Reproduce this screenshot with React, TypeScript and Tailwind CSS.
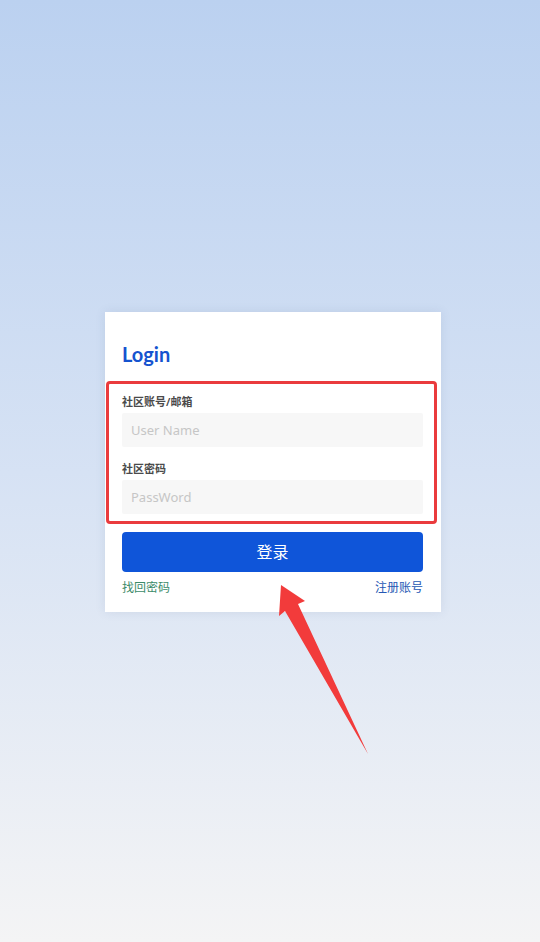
import React from 'react'

const cjk = '"Noto Sans", "Noto Sans CJK SC", sans-serif'

function Field({ label, placeholder, type }: { label: string; placeholder: string; type: string }) {
  return (
    <div>
      <div className="text-[11px] leading-[16px] font-semibold text-[#4a4a4a]">{label}</div>
      <input
        type={type === 'password' ? 'text' : type}
        placeholder={placeholder}
        className="mt-[3px] block w-full h-[34px] rounded-[2px] bg-[#f7f7f7] pl-[9px] text-[13px] text-[#333] outline-none placeholder:text-[#c6c6c6]"
      />
    </div>
  )
}

export default function App() {
  return (
    <div
      className="relative w-full min-h-[942px] bg-gradient-to-b from-[#bbd1f0] via-[#d6e2f4] to-[#f4f4f5] pt-[312px]"
      style={{ fontFamily: cjk }}
    >
      <div className="ml-[105px] w-[336px] bg-white pl-[17px] pr-[18px] pt-[28px] pb-[15px] shadow-[0_0_10px_rgba(60,80,120,0.10)]">
        <h1 className="text-[20px] leading-[28px] font-bold text-[#1553cf] font-['Lato']">Login</h1>

        {/* red annotation box round the fields */}
        <div className="mt-[13px] -ml-[16px] -mr-[14px] rounded-[4px] border-[3px] border-[#ea3b3d] pl-[13px] pr-[11px] pt-[10px] pb-[7px]">
          <Field label="社区账号/邮箱" placeholder="User Name" type="text" />
          <div className="mt-[14px]">
            <Field label="社区密码" placeholder="PassWord" type="password" />
          </div>
        </div>

        <button className="mt-[8px] block w-full h-[40px] rounded-[4px] bg-[#0f55d9] text-white text-[16px]">
          登录
        </button>

        <div className="mt-[7px] flex justify-between text-[12px] leading-[18px]">
          <a className="text-[#3b8b69]">找回密码</a>
          <a className="text-[#2558b4]">注册账号</a>
        </div>
      </div>

      {/* red arrow pointing at the button */}
      <svg className="absolute left-0 top-0 pointer-events-none" width="540" height="942" viewBox="0 0 540 942">
        <polygon points="281,585 305,601 298,604 368,754 285,611 279,616" fill="#f23b3b" />
      </svg>
    </div>
  )
}
